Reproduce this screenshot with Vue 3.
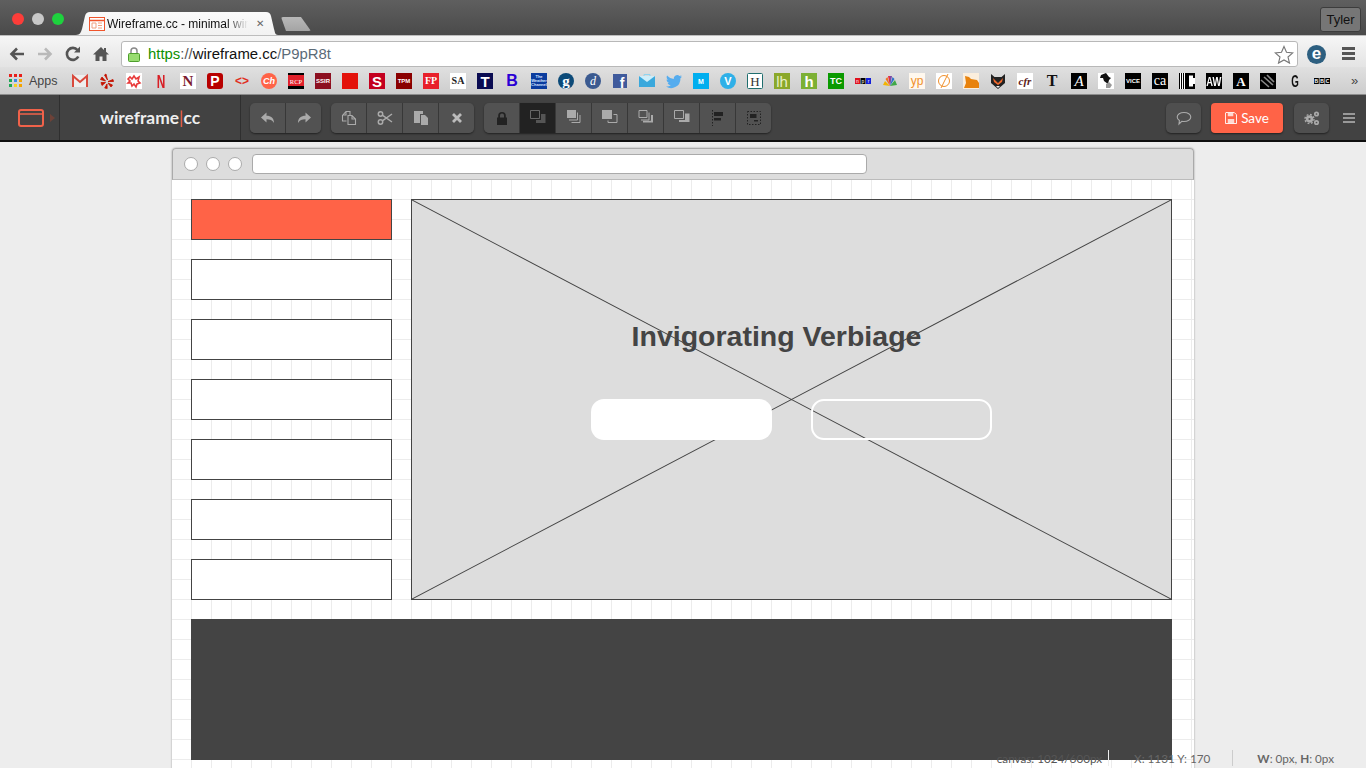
<template>
  <div class="screen">
    <!-- browser chrome -->
    <div class="tabstrip">
      <div class="lights">
        <span class="light red"></span>
        <span class="light grey"></span>
        <span class="light green"></span>
      </div>
      <div class="tab">
        <svg class="tab-fav" width="16" height="14" viewBox="0 0 16 14">
          <rect x=".5" y=".5" width="15" height="13" fill="#fff" stroke="#f0552c" />
          <path d="M1 3.5h14" stroke="#f0552c" stroke-width="1.4" />
          <path d="M3 6h4v5H3zM9 6h4M9 8.5h4M9 11h4" stroke="#f0a080" fill="none" />
        </svg>
        <span class="tab-title">Wireframe.cc - minimal wireframing</span>
        <span class="tab-close">✕</span>
      </div>
      <div class="newtab"></div>
      <div class="profile">Tyler</div>
    </div>

    <div class="navrow">
      <svg class="navicon" width="16" height="16" viewBox="0 0 16 16">
        <path d="M15 8H3M8 2.500 2.500 8 8 13.500" fill="none" stroke="#555" stroke-width="2.600" />
      </svg>
      <svg class="navicon" width="16" height="16" viewBox="0 0 16 16">
        <path d="M1 8h12M8 2.500 13.500 8 8 13.500" fill="none" stroke="#b9b9b9" stroke-width="2.600" />
      </svg>
      <svg class="navicon" width="16" height="16" viewBox="0 0 16 16">
        <path d="M13.300 10.500A6 6 0 1 1 12.500 4" fill="none" stroke="#555" stroke-width="2.600" />
        <path d="M9 6.500h6v-6z" fill="#555" />
      </svg>
      <svg class="navicon" width="16" height="16" viewBox="0 0 16 16">
        <path d="M8 1 0 8.500h2.500V15h4v-4.500h3V15h4V8.500H16l-3-2.800V2h-2v1.900z" fill="#555" />
      </svg>
      <div class="omnibox">
        <svg class="lock" width="12" height="15" viewBox="0 0 12 15">
          <path d="M3 7V4a3 3 0 0 1 6 0v3" fill="none" stroke="#8a8a8a" stroke-width="1.500" />
          <rect x=".5" y="6.500" width="11" height="8" rx="1" fill="#98dc70" stroke="#4e9e2c" />
        </svg>
        <span class="url"><span class="u-https">https</span><span class="u-dim">://</span><span class="u-host">wireframe.cc</span><span class="u-path">/P9pR8t</span></span>
        <svg class="star" width="20" height="19" viewBox="0 0 20 19">
          <path d="M10 1.500 12.500 7.300l6.300.6-4.800 4.100 1.500 6.100L10 14.900l-5.500 3.200L6 12 1.200 7.900l6.300-.6z" fill="#fff" stroke="#777" stroke-width="1.100" />
        </svg>
      </div>
      <span class="ext">e</span>
      <span class="burger"><i></i><i></i><i></i></span>
    </div>

    <div class="bookmarks">
      <span class="apps"><i v-for="c in appDots" :key="c.id" :style="{ background: c.color }"></i></span>
      <span class="apps-label">Apps</span>
      <div class="favs">
        <span
          v-for="f in favicons"
          :key="f.id"
          class="fav"
          :style="{ background: f.bg, color: f.c, fontSize: f.fs + 'px', fontFamily: f.ff, fontWeight: f.fw, fontStyle: f.it, borderRadius: f.r, letterSpacing: f.ls }"
        ><span v-if="f.svg" class="fav-svg" v-html="f.svg"></span><span v-else :style="{ transform: f.tf }">{{ f.t }}</span></span>
      </div>
      <span class="more">»</span>
    </div>

    <!-- app toolbar -->
    <div class="appbar">
      <div class="logo-cell">
        <svg width="26" height="18" viewBox="0 0 26 18">
          <rect x="1" y="1" width="24" height="16" rx="2" fill="none" stroke="#f0624a" stroke-width="2" />
          <path d="M1 5h24" stroke="#f0624a" stroke-width="1.500" />
        </svg>
        <span class="logo-arrow"></span>
      </div>
      <div class="brand">wireframe<span class="brand-bar">|</span>cc</div>

      <div class="btn-group first">
        <button class="tool">
          <svg width="16" height="16" viewBox="0 0 16 16"><path d="M6.500 2.500 1 7.500l5.500 5V9.300c3.500 0 6 .8 7.500 3.700 0-4.800-3-7.200-7.500-7.200z" /></svg>
        </button>
        <button class="tool">
          <svg width="16" height="16" viewBox="0 0 16 16"><path d="M9.500 2.500 15 7.500l-5.500 5V9.300C6 9.300 3.500 10.100 2 13c0-4.800 3-7.200 7.500-7.200z" /></svg>
        </button>
      </div>

      <div class="btn-group">
        <button class="tool">
          <svg width="16" height="16" viewBox="0 0 16 16" class="line"><path d="M5.500 11H1.500V5.500L5 1.500h4V5M5 1.500V5H1.500" /><path d="M7 5.500h4L14.500 9v5.500H7zM11 5.500V9h3.500" /></svg>
        </button>
        <button class="tool">
          <svg width="16" height="16" viewBox="0 0 16 16" class="line thick"><circle cx="3.500" cy="4" r="2.200" /><circle cx="3.500" cy="12" r="2.200" /><path d="M5.300 5.200 15 12M5.300 10.800 15 4" /></svg>
        </button>
        <button class="tool">
          <svg width="16" height="16" viewBox="0 0 16 16"><path d="M1 1h9v3H7v9H1z" /><path d="M8 5h4l3 3v7H8z" /></svg>
        </button>
        <button class="tool">
          <svg width="16" height="16" viewBox="0 0 16 16" class="cross"><path d="M4 4l8 8M12 4l-8 8" /></svg>
        </button>
      </div>

      <div class="btn-group">
        <button class="tool">
          <svg width="10" height="13" viewBox="0 0 10 13" class="dark"><path d="M0 5.500h1.200V3.500a3.800 3.500 0 0 1 7.600 0v2H10V13H0zM3 5.500h4v-2a2 2 0 0 0-4 0z" /></svg>
        </button>
        <button class="tool active">
          <svg width="16" height="16" viewBox="0 0 16 16" class="layers"><path class="s" d="M.5 .5h9v8h-9z" /><path class="f" d="M11 4h4.500v9H6v-3h5z" /></svg>
        </button>
        <button class="tool">
          <svg width="16" height="16" viewBox="0 0 16 16" class="layers"><path class="f" d="M1 0h9v8H1z" /><path class="s" d="M11.500 2.500v7.500H3M14 5v7.500H5.500" /></svg>
        </button>
        <button class="tool">
          <svg width="16" height="16" viewBox="0 0 16 16" class="layers"><path class="f" d="M0 0h10v9H0z" /><path class="s" d="M11.500 4.500h3.500v8H6v-2" /></svg>
        </button>
        <button class="tool">
          <svg width="16" height="16" viewBox="0 0 16 16" class="layers"><path class="s" d="M1 .5h8v7H1z" /><path class="s" d="M11 2.500V10H3" /><path class="f" d="M13 5h2v7.500H5V10.800h8z" /></svg>
        </button>
        <button class="tool">
          <svg width="16" height="16" viewBox="0 0 16 16" class="layers"><path class="s" d="M.5 .5h9v8h-9z" /><path class="f" d="M11 3.500h4.500v8.500H5v-2h6z" /></svg>
        </button>
        <button class="tool">
          <svg width="16" height="16" viewBox="0 0 16 16"><path d="M2.500 0v16" stroke="#222" stroke-dasharray="1.500 1.500" fill="none" /><path d="M4 2h9v4H4zM4 8h7v2.500H4z" fill="#222" /></svg>
        </button>
        <button class="tool">
          <svg width="16" height="16" viewBox="0 0 16 16"><rect x="1.500" y="1.500" width="13" height="13" fill="none" stroke="#222" stroke-dasharray="1.500 1.500" /><path d="M4 4h6.500v4H4zM8 10h4v1.500H8z" fill="#222" /></svg>
        </button>
      </div>

      <div class="right-tools">
        <button class="tool solo">
          <svg width="16" height="16" viewBox="0 0 16 16" class="line"><path d="M8 2.500c3.800 0 6.800 1.900 6.800 4.500S11.800 11.500 8 11.500c-.8 0-1.500-.1-2.200-.2L3 14l.4-3.500C2 9.600 1.200 8.400 1.200 7c0-2.600 3-4.500 6.800-4.500z" /></svg>
        </button>
        <button class="save">
          <svg width="12" height="12" viewBox="0 0 13 13"><path d="M1 .5h9l2.500 2.500v9.500H.5V1z" fill="none" stroke="#fff" /><path d="M3 1h6v3.500H3zM3 7.500h7v4.500H3z" fill="#fff" fill-opacity=".75" /></svg>
          Save
        </button>
        <button class="tool solo">
          <svg width="16" height="16" viewBox="0 0 16 16" fill="none" stroke="#aaa">
            <circle cx="5.500" cy="9" r="2.400" stroke-width="2.600" />
            <circle cx="5.500" cy="9" r="4.500" stroke-width="1.400" stroke-dasharray="1.800 1.730" />
            <circle cx="12.500" cy="4" r="1.700" stroke-width="1.700" />
            <circle cx="12.500" cy="12.500" r="1.700" stroke-width="1.700" />
          </svg>
        </button>
        <span class="menu"><i></i><i></i><i></i></span>
      </div>
    </div>

    <!-- wireframe canvas -->
    <div class="stage">
      <div class="canvas">
        <div class="win-bar">
          <span class="win-dot"></span>
          <span class="win-dot"></span>
          <span class="win-dot"></span>
          <span class="win-url"></span>
        </div>
        <div class="sheet">
          <div class="columns">
            <div class="sidebar">
              <div v-for="n in 7" :key="n" class="side-box" :class="{ on: n === 1 }"></div>
            </div>
            <div class="hero">
              <svg class="cross-lines" viewBox="0 0 100 100" preserveAspectRatio="none">
                <path d="M0 0 100 100M100 0 0 100" stroke="#444" stroke-width="1" vector-effect="non-scaling-stroke" fill="none" />
              </svg>
              <h1 class="headline">Invigorating Verbiage</h1>
              <div class="hero-btns">
                <div class="pill solid"></div>
                <div class="pill outline"></div>
              </div>
            </div>
          </div>
          <div class="footer"></div>
        </div>
      </div>
    </div>

    <div class="status">
      <span class="st-a">canvas: 1024/600px</span>
      <span class="st-b">X: 1131 Y: 170</span>
      <span class="st-c"><b>W</b>: 0px, <b>H</b>: 0px</span>
    </div>
  </div>
</template>

<script setup>
const sans = '"Liberation Sans", sans-serif'
const serif = '"Liberation Serif", serif'

const appDots = ['#e8201c', '#e8201c', '#e8201c', '#1fa855', '#3b8ae7', '#f4a400', '#1fa855', '#f8d020', '#f4a400'].map((color, id) => ({ id, color }))

const list = [
  { svg: '<svg viewBox="0 0 16 16" width="16" height="16"><rect y="2" width="16" height="12" fill="#eee"/><path d="M1 14V3l7 6 7-6v11" fill="none" stroke="#d9493c" stroke-width="2"/></svg>' },
  { svg: '<svg viewBox="0 0 16 16" width="16" height="16"><path d="M7 1l1.500 6L5.500 2zM9 8.500l5-2 .5 2zM9 10l4.500 2-1.500 2zM8 11l.2 4.500-2.500-.5zM6.500 9.500l-3.500 3-1-3zM6.500 8l-5-1.500 1.500-2.500z" fill="#c41200" stroke="#c41200" stroke-width=".8"/></svg>' },
  { svg: '<svg viewBox="0 0 16 16" width="16" height="16"><rect width="16" height="16" fill="#fff"/><path d="M2 6l2-2 2 2 2-3 2 3 3-2-1 4 2 2-3 1-1 3-2-3-2 2-1-3-3 0 2-2z" fill="none" stroke="#e83a3a" stroke-width="1.600"/></svg>' },
  { t: 'N', c: '#d81f26', fs: 14, ff: sans, fw: 700, tf: 'scale(.85,1.3)' },
  { t: 'N', bg: '#fff', c: '#7c1c30', fs: 15, ff: serif, fw: 700 },
  { t: 'P', bg: '#b80000', c: '#fff', fs: 14, ff: sans, fw: 700, r: '3px' },
  { t: '<>', c: '#e0301e', fs: 12, ff: sans, fw: 700 },
  { t: 'Ch', bg: '#ff6347', c: '#fff', fs: 9, ff: sans, fw: 700, it: 'italic', r: '50%' },
  { svg: '<svg viewBox="0 0 16 16" width="16" height="16"><rect width="16" height="16" fill="#000"/><rect y="2" width="16" height="11" fill="#e0202a"/><text x="8" y="10.500" font-size="6.500" font-family="Liberation Serif, serif" fill="#fff" text-anchor="middle">RCP</text></svg>' },
  { t: 'SSIR', bg: '#8c0f20', c: '#fff', fs: 6, ff: sans, fw: 700 },
  { bg: '#e3120b', t: '' },
  { t: 'S', bg: '#c4001f', c: '#fff', fs: 15, ff: sans, fw: 700 },
  { t: 'TPM', bg: '#8a0000', c: '#fff', fs: 6, ff: sans, fw: 700 },
  { t: 'FP', bg: '#e8202a', c: '#fff', fs: 10, ff: serif, fw: 700 },
  { t: 'SA', bg: '#fff', c: '#222', fs: 10, ff: serif, fw: 700 },
  { t: 'T', bg: '#0b0c52', c: '#fff', fs: 15, ff: sans, fw: 700 },
  { t: 'B', c: '#2a00d4', fs: 16, ff: sans, fw: 700 },
  { t: 'The Weather Channel', bg: '#0b3c9e', c: '#d8e4ff', fs: 4, ff: sans, fw: 700 },
  { t: 'g', bg: '#0c4a78', c: '#fff', fs: 15, ff: serif, fw: 700, r: '50%' },
  { t: 'd', bg: '#3b5a90', c: '#fff', fs: 12, ff: serif, it: 'italic', r: '50%' },
  { svg: '<svg viewBox="0 0 16 16" width="16" height="16"><rect x="1" y="1" width="14" height="14" fill="#3f5a9c"/><text x="10" y="15" font-size="14" font-weight="700" font-family="Liberation Sans, sans-serif" fill="#fff" text-anchor="middle">f</text></svg>' },
  { svg: '<svg viewBox="0 0 16 16" width="16" height="16"><path d="M5 3V1.500h6V3" fill="none" stroke="#8fd4ef"/><rect y="3" width="16" height="11" fill="#3aa8dc"/><path d="M0 3h16L8 9z" fill="#cdeefa"/></svg>' },
  { svg: '<svg viewBox="0 0 16 16" width="16" height="16"><path d="M16 3.500c-.6.300-1.200.4-1.900.5.700-.4 1.200-1 1.400-1.800-.6.400-1.300.6-2 .8A3.300 3.300 0 0 0 7.900 6C5.200 5.900 2.800 4.600 1.100 2.600c-.9 1.500-.4 3.400 1 4.400-.5 0-1-.2-1.500-.4 0 1.600 1.100 3 2.600 3.300-.5.100-1 .1-1.500 0 .4 1.300 1.600 2.200 3.100 2.300A6.600 6.600 0 0 1 0 13.500 9.300 9.300 0 0 0 14.400 5.200c.6-.5 1.200-1 1.600-1.700z" fill="#55acee"/></svg>' },
  { t: 'M', bg: '#00aeef', c: '#fff', fs: 7, ff: sans, fw: 700 },
  { t: 'V', bg: '#2fb0e8', c: '#fff', fs: 11, ff: sans, fw: 700, r: '50%' },
  { svg: '<svg viewBox="0 0 16 16" width="16" height="16"><rect x=".5" y=".5" width="15" height="15" rx="1" fill="#fff" stroke="#1f6e6e"/><text x="8" y="13" font-size="13" font-family="Liberation Serif, serif" fill="#333" text-anchor="middle">H</text></svg>' },
  { t: 'lh', bg: '#8aa82a', c: '#e8efc8', fs: 15, ff: sans },
  { t: 'h', bg: '#7cb034', c: '#fff', fs: 15, ff: sans, fw: 700 },
  { t: 'TC', bg: '#0a9a00', c: '#fff', fs: 9, ff: sans, fw: 700 },
  { svg: '<svg viewBox="0 0 16 16" width="16" height="16"><rect y="5" width="5" height="6" fill="#e0101c"/><rect x="5.500" y="5" width="5" height="6" fill="#000"/><rect x="11" y="5" width="5" height="6" fill="#1420d8"/><text x="2.500" y="10" font-size="5" fill="#fff" text-anchor="middle" font-family="Liberation Sans, sans-serif">n</text><text x="8" y="10" font-size="5" fill="#fff" text-anchor="middle" font-family="Liberation Sans, sans-serif">p</text><text x="13.500" y="10" font-size="5" fill="#fff" text-anchor="middle" font-family="Liberation Sans, sans-serif">r</text></svg>' },
  { svg: '<svg viewBox="0 0 16 16" width="16" height="16"><path d="M8 13 1 12 3 8z" fill="#f4b400"/><path d="M8 13 3.500 6 5.500 4z" fill="#f07020"/><path d="M8 13 6 3h2z" fill="#e0304a"/><path d="M8 13V3h2z" fill="#7a4aa8"/><path d="M8 13l2.500-9 2 2z" fill="#2a70c8"/><path d="M8 13l5-6 2 5z" fill="#40a848"/></svg>' },
  { t: 'yp', bg: '#fff8ee', c: '#f0902c', fs: 12, ff: sans },
  { svg: '<svg viewBox="0 0 16 16" width="16" height="16"><rect width="16" height="16" fill="#fff"/><circle cx="8" cy="8" r="5.500" fill="none" stroke="#f0902c"/><path d="M12 1 5 15" stroke="#f0902c"/></svg>' },
  { svg: '<svg viewBox="0 0 16 16" width="16" height="16"><rect width="16" height="16" fill="#fbeedd"/><path d="M1 15l2-5-1-7 4 1 2 2 6 1 2 3v5z" fill="#e8820c"/></svg>' },
  { svg: '<svg viewBox="0 0 16 16" width="16" height="16"><path d="M1 1l3.500 3h7L15 1v9l-7 6-7-6z" fill="#222"/><path d="M3 5l5 5 5-5-1 4-4 3-4-3z" fill="#f0682c"/><path d="M6 13h4l-2 2z" fill="#eee"/></svg>' },
  { t: 'cfr', bg: '#fff', c: '#5a2018', fs: 11, ff: serif, it: 'italic', fw: 700 },
  { t: 'T', c: '#111', fs: 16, ff: serif, fw: 700 },
  { t: 'A', bg: '#000', c: '#fff', fs: 15, ff: serif, it: 'italic' },
  { svg: '<svg viewBox="0 0 16 16" width="16" height="16"><rect width="16" height="16" fill="#fff"/><path d="M3 2l5-2 3 4 2 1-2 2-1 4-4-3-1-3-3 0z" fill="#111"/><path d="M8 11l3-2 3 3-2 3H8z" fill="#999"/></svg>' },
  { t: 'VICE', bg: '#000', c: '#fff', fs: 6, ff: sans, fw: 700 },
  { t: 'ca', bg: '#000', c: '#fff', fs: 14, ff: serif },
  { svg: '<svg viewBox="0 0 16 16" width="16" height="16"><rect width="16" height="16" fill="#fff"/><path d="M.5 0v16M2.500 0v16M4.500 0v16" stroke="#000"/><path d="M6 0h10v5h-2V2.500h-4v11h4V11h2v5H6z" fill="#000"/></svg>' },
  { t: 'AW', bg: '#000', c: '#fff', fs: 11, ff: sans, fw: 700, tf: 'scale(.85,1.2)' },
  { t: 'A', bg: '#000', c: '#fff', fs: 13, ff: serif, fw: 700 },
  { svg: '<svg viewBox="0 0 16 16" width="16" height="16"><rect width="16" height="16" fill="#000"/><path d="M1 7l8 7M4 4l9 8M7 2l7 7" stroke="#888" stroke-width="1.600"/></svg>' },
  { t: 'G', c: '#111', fs: 13, ff: sans, fw: 700, tf: 'scale(.75,1.25)' },
  { svg: '<svg viewBox="0 0 16 16" width="16" height="16"><rect y="5" width="4.800" height="6" fill="#000"/><rect x="5.600" y="5" width="4.800" height="6" fill="#000"/><rect x="11.200" y="5" width="4.800" height="6" fill="#000"/><text x="2.400" y="10" font-size="5" font-weight="700" fill="#fff" text-anchor="middle" font-family="Liberation Sans, sans-serif">B</text><text x="8" y="10" font-size="5" font-weight="700" fill="#fff" text-anchor="middle" font-family="Liberation Sans, sans-serif">B</text><text x="13.600" y="10" font-size="5" font-weight="700" fill="#fff" text-anchor="middle" font-family="Liberation Sans, sans-serif">C</text></svg>' },
]
const favicons = list.map((f, id) => ({ id, ...f }))
</script>

<style scoped>
.screen {
  position: relative;
  width: 1366px;
  height: 768px;
  overflow: hidden;
  background: #ededed;
  font-family: "Liberation Sans", sans-serif;
}

/* tab strip */
.tabstrip {
  position: relative;
  display: flex;
  height: 35px;
  background: linear-gradient(#5f5f5f, #4a4a4a);
}
.lights {
  display: flex;
  gap: 8px;
  padding: 13px 0 0 12px;
  width: 64px;
  box-sizing: border-box;
}
.light {
  width: 12px;
  height: 12px;
  flex: none;
  border-radius: 50%;
}
.light.red { background: #fc3d39; }
.light.grey { background: #c8c8c8; }
.light.green { background: #1ed23e; }
.tab {
  display: flex;
  align-items: center;
  width: 202px;
  height: 23px;
  margin: 12px 0 0 12px;
  padding: 0 12px 0 13px;
  box-sizing: border-box;
  background: linear-gradient(#fafafa, #f2f2f2);
  clip-path: path("M0 23 C4 23 5 20 6 17 L9 4 C10 1 11 0 14 0 H190 C193 0 194 1 195 4 L198 17 C199 20 199 23 202 23 Z");
}
.tab-fav { flex: none; margin-right: 2px; }
.tab-title {
  flex: 1;
  overflow: hidden;
  white-space: nowrap;
  font-size: 12px;
  color: #111;
  -webkit-mask-image: linear-gradient(to right, #000 85%, transparent 100%);
  mask-image: linear-gradient(to right, #000 85%, transparent 100%);
}
.tab-close {
  flex: none;
  width: 13px;
  margin-left: 5px;
  font-size: 10px;
  color: #666;
  text-align: center;
}
.newtab {
  width: 30px;
  height: 14px;
  margin: 17px 0 0 3px;
  background: linear-gradient(#b8b8b8, #a4a4a4);
  clip-path: polygon(0 0, 20px 0, 30px 100%, 5px 100%);
  border-radius: 2px;
}
.profile {
  position: absolute;
  top: 7px;
  right: 5px;
  width: 41px;
  height: 25px;
  box-sizing: border-box;
  border: 1px solid #3c3c3c;
  border-radius: 3px;
  background: #767676;
  color: #111;
  font-size: 13px;
  line-height: 23px;
  text-align: center;
}

/* address row */
.navrow {
  display: flex;
  align-items: flex-start;
  gap: 12px;
  height: 32px;
  padding-left: 9px;
  box-sizing: border-box;
  background: linear-gradient(#f6f6f6, #e4e4e4);
  border-top: 1px solid #bdbdbd;
}
.navicon { flex: none; margin-top: 10px; }
.omnibox {
  display: flex;
  align-items: center;
  flex: none;
  width: 1177px;
  height: 26px;
  margin-top: 5px;
  box-sizing: border-box;
  border: 1px solid #b8b8b8;
  border-radius: 3px;
  background: #fff;
  padding: 0 3px 0 6px;
}
.lock { flex: none; }
.url {
  flex: 1;
  margin-left: 8px;
  font-size: 14.900px;
  white-space: nowrap;
}
.u-https { color: #0d9000; }
.u-dim { color: #555; }
.u-host { color: #111; }
.u-path { color: #5b6b78; }
.star { flex: none; }
.ext {
  flex: none;
  width: 19px;
  height: 19px;
  margin: 9px 0 0 -3px;
  border-radius: 50%;
  background: #2d5f80;
  color: #fff;
  font-size: 17px;
  font-weight: 700;
  line-height: 17px;
  text-align: center;
}
.burger {
  display: flex;
  flex-direction: column;
  gap: 2px;
  flex: none;
  width: 13px;
  margin: 11px 0 0 4px;
}
.burger i {
  height: 3px;
  background: #555;
}

/* bookmarks */
.bookmarks {
  display: flex;
  align-items: flex-start;
  height: 28px;
  box-sizing: border-box;
  padding-top: 6px;
  background: linear-gradient(#e0e0e0, #cdcdcd);
  border-bottom: 1px solid #8c8c8c;
}
.apps {
  display: grid;
  grid-template-columns: repeat(3, 3px);
  gap: 2px;
  margin: 1px 0 0 9px;
  flex: none;
}
.apps i {
  width: 3px;
  height: 3px;
}
.apps-label {
  width: 43px;
  margin-left: 7px;
  font-size: 12.500px;
  line-height: 16px;
  color: #444;
  flex: none;
}
.favs {
  display: flex;
  gap: 11px;
}
.fav {
  display: flex;
  align-items: center;
  justify-content: center;
  width: 16px;
  height: 16px;
  overflow: hidden;
  line-height: 1;
  text-align: center;
  flex: none;
}
.fav-svg { display: block; width: 16px; height: 16px; }
.fav > span { display: block; }
.more {
  margin-left: 21px;
  font-size: 13px;
  line-height: 16px;
  color: #444;
}

/* app toolbar */
.appbar {
  display: flex;
  align-items: flex-start;
  height: 47px;
  box-sizing: border-box;
  background: #424242;
  border-bottom: 2px solid #0e0e0e;
}
.logo-cell {
  display: flex;
  align-items: center;
  width: 60px;
  height: 45px;
  box-sizing: border-box;
  padding-left: 18px;
  border-right: 1px solid #2f2f2f;
}
.logo-arrow {
  width: 0;
  height: 0;
  margin-left: 6px;
  border-left: 5px solid #6e4238;
  border-top: 4px solid transparent;
  border-bottom: 4px solid transparent;
}
.brand {
  width: 181px;
  height: 45px;
  box-sizing: border-box;
  border-right: 1px solid #2f2f2f;
  font-family: Lato, sans-serif;
  font-size: 17.400px;
  font-weight: 700;
  line-height: 45px;
  text-align: center;
  color: #eee;
}
.brand-bar { color: #f0624a; font-weight: 400; }
.btn-group {
  display: flex;
  margin: 8px 0 0 10px;
  border-radius: 5px;
  box-shadow: 0 1px 2px rgba(0, 0, 0, .5);
  overflow: hidden;
}
.btn-group.first { margin-left: 9px; }
.tool {
  display: flex;
  align-items: center;
  justify-content: center;
  width: 36px;
  height: 30px;
  padding: 0;
  border: 0;
  border-right: 1px solid #383838;
  background: #525252;
}
.tool:last-child { width: 35px; border-right: 0; }
.tool.active { background: #222; }
.tool svg { fill: #aaa; }
.tool svg.line { fill: none; stroke: #aaa; stroke-width: 1.100; }
.tool svg.line.thick { stroke-width: 1.500; }
.tool svg.cross { fill: none; stroke: #bbb; stroke-width: 2.800; }
.tool svg.dark { fill: #222; }
.tool svg.layers .s { fill: none; stroke: #aaa; stroke-width: 1; }
.tool svg.layers .f { fill: #aaa; }
.tool.active svg.layers .s { stroke: #666; }
.tool.active svg.layers .f { fill: #555; }
.right-tools {
  display: flex;
  margin: 8px 0 0 auto;
  padding-right: 11px;
}
.tool.solo,
.tool.solo:last-child {
  width: 35px;
  border: 0;
  border-radius: 5px;
  background: #4f4f4f;
  box-shadow: 0 1px 2px rgba(0, 0, 0, .5);
}
.tool.solo svg[fill="none"] { fill: none; }
.save {
  display: flex;
  align-items: center;
  justify-content: center;
  gap: 4px;
  width: 72px;
  height: 30px;
  margin: 0 11px 0 10px;
  padding: 0;
  border: 0;
  border-radius: 4px;
  background: #ff6347;
  color: #fff;
  font-family: Lato, sans-serif;
  font-size: 13.500px;
  box-shadow: 0 1px 2px rgba(0, 0, 0, .5);
}
.menu {
  display: flex;
  flex-direction: column;
  gap: 2px;
  width: 12px;
  margin: 10px 0 0 14px;
}
.menu i {
  height: 2px;
  background: #999;
}

/* canvas */
.stage {
  padding: 6px 0 0 172px;
}
.canvas {
  width: 1022px;
  border-radius: 4px 4px 0 0;
  box-shadow: 0 0 2px rgba(0, 0, 0, .4);
  background: #fff;
}
.win-bar {
  display: flex;
  align-items: center;
  gap: 8px;
  height: 32px;
  box-sizing: border-box;
  padding-left: 11px;
  background: #ddd;
  border: 1px solid #aaa;
  border-bottom-color: #bbb;
  border-radius: 4px 4px 0 0;
}
.win-dot {
  width: 14px;
  height: 14px;
  box-sizing: border-box;
  flex: none;
  border: 1px solid #aaa;
  border-radius: 50%;
  background: #fff;
}
.win-url {
  width: 615px;
  height: 20px;
  box-sizing: border-box;
  margin-left: 2px;
  border: 1px solid #aaa;
  border-radius: 4px;
  background: #fff;
}
.sheet {
  height: 600px;
  box-sizing: border-box;
  padding: 19px 0 0 19px;
  background-color: #fff;
  background-image:
    linear-gradient(to right, #ececec 1px, transparent 1px),
    linear-gradient(to bottom, #ececec 1px, transparent 1px);
  background-size: 20px 20px;
  background-position: 19px 19px;
}
.columns {
  display: flex;
  gap: 19px;
}
.sidebar {
  display: flex;
  flex-direction: column;
  gap: 19px;
  width: 201px;
}
.side-box {
  height: 41px;
  box-sizing: border-box;
  border: 1px solid #444;
  background: #fff;
}
.side-box.on { background: #ff6347; }
.hero {
  position: relative;
  width: 761px;
  height: 401px;
  box-sizing: border-box;
  border: 1px solid #444;
  background: #ddd;
}
.cross-lines {
  position: absolute;
  inset: 0;
  width: 100%;
  height: 100%;
}
.headline {
  position: relative;
  margin: 118px 30px 0 0;
  font-size: 28.500px;
  font-weight: 700;
  line-height: 36px;
  text-align: center;
  color: #444;
}
.hero-btns {
  position: relative;
  display: flex;
  justify-content: center;
  gap: 39px;
  margin-top: 45px;
}
.pill {
  width: 181px;
  height: 41px;
  box-sizing: border-box;
  border-radius: 13px;
}
.pill.solid { background: #fff; }
.pill.outline { border: 2px solid #fff; }
.footer {
  width: 981px;
  height: 141px;
  margin-top: 19px;
  background: #444;
}

/* status readout over the canvas */
.status {
  position: absolute;
  left: 0;
  right: 0;
  bottom: 2px;
  display: flex;
  justify-content: flex-end;
  height: 16px;
  padding-right: 32px;
  font-family: Lato, sans-serif;
  font-size: 11.700px;
  line-height: 16px;
  color: #666;
}
.status span { white-space: nowrap; }
.st-a {
  padding-right: 6px;
  border-right: 1px solid #eee;
  color: #555;
}
.st-b {
  margin-left: 25px;
  padding-right: 22px;
  border-right: 1px solid #ccc;
}
.st-c { margin-left: 24px; }
</style>
